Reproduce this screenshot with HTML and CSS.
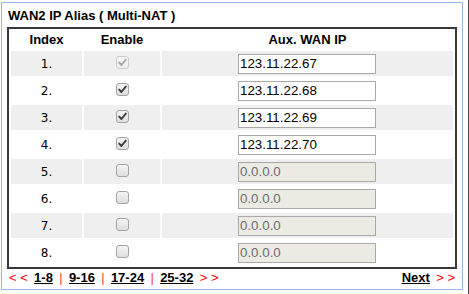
FILE: index.html
```html
<!DOCTYPE html>
<html>
<head>
<meta charset="utf-8">
<link rel="stylesheet" href="styles.css">
</head>
<body>
<div class="panel">
  <div class="title">WAN2 IP Alias ( Multi-NAT )</div>
  <table class="grid">
    <thead>
      <tr><th class="c-idx">Index</th><th class="c-en">Enable</th><th class="c-ip">Aux. WAN IP</th></tr>
    </thead>
    <tbody>
      <tr class="shade">
        <td class="idx">1.</td>
        <td class="en"><span class="cb checked disabled"><svg viewBox="0 0 13 13" width="13" height="13"><path d="M3.2 6.6 L5.4 9 L9.8 3.6" fill="none" stroke="currentColor" stroke-width="1.9" stroke-linecap="round" stroke-linejoin="round"/></svg></span></td>
        <td class="ip"><input class="ipbox" type="text" value="123.11.22.67"></td>
      </tr>
      <tr>
        <td class="idx">2.</td>
        <td class="en"><span class="cb checked"><svg viewBox="0 0 13 13" width="13" height="13"><path d="M3.2 6.6 L5.4 9 L9.8 3.6" fill="none" stroke="currentColor" stroke-width="1.9" stroke-linecap="round" stroke-linejoin="round"/></svg></span></td>
        <td class="ip"><input class="ipbox" type="text" value="123.11.22.68"></td>
      </tr>
      <tr class="shade">
        <td class="idx">3.</td>
        <td class="en"><span class="cb checked"><svg viewBox="0 0 13 13" width="13" height="13"><path d="M3.2 6.6 L5.4 9 L9.8 3.6" fill="none" stroke="currentColor" stroke-width="1.9" stroke-linecap="round" stroke-linejoin="round"/></svg></span></td>
        <td class="ip"><input class="ipbox" type="text" value="123.11.22.69"></td>
      </tr>
      <tr>
        <td class="idx">4.</td>
        <td class="en"><span class="cb checked"><svg viewBox="0 0 13 13" width="13" height="13"><path d="M3.2 6.6 L5.4 9 L9.8 3.6" fill="none" stroke="currentColor" stroke-width="1.9" stroke-linecap="round" stroke-linejoin="round"/></svg></span></td>
        <td class="ip"><input class="ipbox" type="text" value="123.11.22.70"></td>
      </tr>
      <tr class="shade">
        <td class="idx">5.</td>
        <td class="en"><span class="cb"></span></td>
        <td class="ip"><input class="ipbox" type="text" value="0.0.0.0" disabled></td>
      </tr>
      <tr>
        <td class="idx">6.</td>
        <td class="en"><span class="cb"></span></td>
        <td class="ip"><input class="ipbox" type="text" value="0.0.0.0" disabled></td>
      </tr>
      <tr class="shade">
        <td class="idx">7.</td>
        <td class="en"><span class="cb"></span></td>
        <td class="ip"><input class="ipbox" type="text" value="0.0.0.0" disabled></td>
      </tr>
      <tr>
        <td class="idx">8.</td>
        <td class="en"><span class="cb"></span></td>
        <td class="ip"><input class="ipbox" type="text" value="0.0.0.0" disabled></td>
      </tr>
    </tbody>
  </table>
  <div class="nav">
    <div class="pages">
      <span class="arrow">&lt; &lt;</span>
      <a class="plink" href="#">1-8</a>
      <span class="sep">|</span>
      <a class="plink" href="#">9-16</a>
      <span class="sep">|</span>
      <a class="plink" href="#">17-24</a>
      <span class="sep">|</span>
      <a class="plink" href="#">25-32</a>
      <span class="arrow">&gt; &gt;</span>
    </div>
    <div class="next">
      <a class="plink" href="#">Next</a>
      <span class="arrow">&gt; &gt;</span>
    </div>
  </div>
</div>
</body>
</html>
```
FILE: styles.css
```css
html, body {
  margin: 0;
  padding: 0;
  background: #ffffff;
}
body {
  width: 468px;
  height: 294px;
  border-right: 1px solid #4a4a4a;
  font-family: "Liberation Sans", Arial, sans-serif;
  color: #000;
  overflow: hidden;
}
.panel {
  box-sizing: border-box;
  width: 462px;
  margin: 2px 0 0 1px;
  border: 1px solid #9cb6e2;
  padding: 5px 0 3px 0;
}
.title {
  font-size: 13px;
  font-weight: bold;
  line-height: 16px;
  padding-left: 6px;
}
.grid {
  margin: 3px 0 0 5px;
  width: 450px;
  border: 2px solid #383838;
  border-collapse: separate;
  border-spacing: 2px;
  table-layout: fixed;
}
.grid th {
  font-size: 13px;
  font-weight: bold;
  height: 18px;
  padding: 0;
  text-align: center;
  vertical-align: middle;
  line-height: 16px;
}
.c-idx { width: 71px; }
.c-en { width: 76px; }
.c-ip { width: 291px; }
.grid td {
  height: 25px;
  padding: 0;
  vertical-align: middle;
}
.shade td { background: #efefef; }
.idx {
  text-align: center;
  font-family: "DejaVu Sans", Verdana, sans-serif;
  font-size: 12px;
}
.cb {
  display: block;
  box-sizing: border-box;
  width: 13px;
  height: 13px;
  margin: 0 auto;
  border: 1px solid #a3a3a3;
  border-radius: 3px;
  background: linear-gradient(#f4f4f4, #dedede);
  color: #3e3e3e;
  position: relative;
  top: -1px;
}
.cb svg {
  display: block;
  margin: -1px;
}
.cb.disabled {
  border-color: #cdcdcd;
  background: linear-gradient(#f6f6f6, #ececec);
  color: #a9a9a9;
}
.ip { padding-left: 76px !important; }
.ipbox {
  display: block;
  box-sizing: border-box;
  width: 138px;
  height: 20px;
  margin: 0;
  padding: 1px;
  border: 1px solid #a9a9a9;
  border-radius: 0;
  background: #fff;
  font-family: "Liberation Sans", Arial, sans-serif;
  font-size: 13.33px;
  color: #000;
  outline: none;
}
.ipbox:disabled {
  background: #ebebe4;
  color: #6d6d6d;
}
.nav {
  display: flex;
  justify-content: space-between;
  margin-top: 1px;
  padding: 0 7px 0 7px;
  font-size: 13px;
  line-height: 16px;
}
.pages, .next {
  display: flex;
  gap: 6.3px;
}
.arrow {
  color: #ff0000;
}
.sep {
  color: #ff3b2f;
}
.plink {
  color: #000;
  font-weight: bold;
  text-decoration: underline;
}
```
